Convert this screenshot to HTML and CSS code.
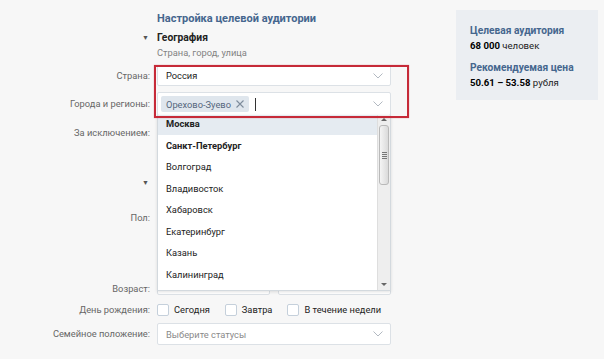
FILE: index.html
```html
<!DOCTYPE html>
<html lang="ru">
<head>
  <meta charset="UTF-8" />
  <title>Настройка целевой аудитории</title>
  <link rel="stylesheet" href="styles.css">
</head>
<body>
  <div class="page">
    <div class="form">
      <div class="row title-row">
        <div class="label"></div>
        <h2 class="title">Настройка целевой аудитории</h2>
      </div>

      <div class="row section">
        <div class="label"><span class="arrow">▼</span></div>
        <div class="section-name">География</div>
      </div>
      <div class="row hint-row">
        <div class="label"></div>
        <div class="hint">Страна, город, улица</div>
      </div>

      <div class="row country-row">
        <div class="label">Страна:</div>
        <div class="select">
          <span class="value">Россия</span>
          <svg class="chevron" width="10" height="6" viewBox="0 0 10 6"><polyline points="0.5,0.5 5,5 9.5,0.5" fill="none" stroke="#a9b1ba" stroke-width="0.9"/></svg>
        </div>
      </div>

      <div class="row cities-row">
        <div class="label">Города и регионы:</div>
        <div class="select select-tokens">
          <span class="token">Орехово-Зуево
            <svg width="8" height="8" viewBox="0 0 8 8"><path d="M0.5 0.5 L7.5 7.5 M7.5 0.5 L0.5 7.5" stroke="#7d8c9c" stroke-width="1.1"/></svg>
          </span>
          <span class="caret"></span>
          <svg class="chevron" width="10" height="6" viewBox="0 0 10 6"><polyline points="0.5,0.5 5,5 9.5,0.5" fill="none" stroke="#a9b1ba" stroke-width="0.9"/></svg>

          <div class="dropdown">
            <ul class="options">
              <li class="active strong">Москва</li>
              <li class="strong">Санкт-Петербург</li>
              <li>Волгоград</li>
              <li>Владивосток</li>
              <li>Хабаровск</li>
              <li>Екатеринбург</li>
              <li>Казань</li>
              <li>Калининград</li>
            </ul>
            <div class="scrollbar">
              <span class="sb-up"></span>
              <span class="sb-thumb"><i></i><i></i><i></i><i></i></span>
              <span class="sb-down"></span>
            </div>
          </div>
        </div>
      </div>

      <div class="row except-row">
        <div class="label">За исключением:</div>
        <div class="select"></div>
      </div>

      <div class="row section section-2">
        <div class="label"><span class="arrow">▼</span></div>
        <div class="section-name"></div>
      </div>

      <div class="row sex-row">
        <div class="label">Пол:</div>
        <div class="plain"></div>
      </div>

      <div class="row age-row">
        <div class="label">Возраст:</div>
        <div class="age-fields">
          <div class="select"></div>
          <div class="select"></div>
        </div>
      </div>

      <div class="row bday-row">
        <div class="label">День рождения:</div>
        <div class="checks">
          <label class="check"><span class="box"></span>Сегодня</label>
          <label class="check"><span class="box"></span>Завтра</label>
          <label class="check"><span class="box"></span>В течение недели</label>
        </div>
      </div>

      <div class="row family-row">
        <div class="label">Семейное положение:</div>
        <div class="select">
          <span class="placeholder">Выберите статусы</span>
          <svg class="chevron" width="10" height="6" viewBox="0 0 10 6"><polyline points="0.5,0.5 5,5 9.5,0.5" fill="none" stroke="#a9b1ba" stroke-width="0.9"/></svg>
        </div>
      </div>

      <div class="highlight"></div>
    </div>

    <aside class="summary">
      <div class="summary-title">Целевая аудитория</div>
      <div class="summary-value"><b>68 000</b> человек</div>
      <div class="summary-title second">Рекомендуемая цена</div>
      <div class="summary-value"><b>50.61 – 53.58</b> рубля</div>
    </aside>
  </div>
</body>
</html>
```

FILE: styles.css
```css
body {
  margin: 0;
  background: #f7f7f7;
  font-family: Roboto, "Open Sans", sans-serif;
  font-size: 9.3px;
  color: #222;
}
.page {
  display: flex;
  align-items: flex-start;
  padding-top: 11px;
}
.form {
  position: relative;
  width: 410px;
}
.row {
  display: grid;
  grid-template-columns: 150px 234px;
  column-gap: 7px;
  align-items: center;
}
.label {
  text-align: right;
  color: #666;
  line-height: 14px;
}
.title-row {
  height: 15px;
}
.title {
  margin: 0;
  font-size: 11px;
  line-height: 15px;
  font-weight: bold;
  color: #45668e;
}
.section {
  margin-top: 4px;
  height: 14px;
  line-height: 14px;
}
.section-name {
  font-weight: bold;
  font-size: 10.3px;
  color: #222;
}
.arrow {
  font-size: 7px;
  color: #555;
  margin-right: 1px;
}
.hint-row {
  margin-top: 2px;
  height: 14px;
}
.hint {
  color: #828282;
  line-height: 14px;
}
.select {
  position: relative;
  height: 21px;
  box-sizing: border-box;
  background: #fff;
  border: 1px solid #dce1e6;
  border-radius: 2px;
  display: flex;
  align-items: center;
  padding: 0 8px;
}
.select .value {
  color: #222;
}
.chevron {
  position: absolute;
  right: 7px;
  top: 50%;
  margin-top: -3px;
}
.country-row {
  margin-top: 5px;
}
.cities-row {
  margin-top: 6px;
}
.select-tokens {
  height: 24px;
  padding: 0 3px;
}
.token {
  display: inline-flex;
  align-items: center;
  gap: 5px;
  height: 16px;
  padding: 0 5px;
  background: #dfe6ed;
  border-radius: 2px;
  color: #55677d;
}
.caret {
  width: 1px;
  height: 13px;
  background: #333;
  margin-left: 6px;
}
.except-row {
  margin-top: 6px;
}
.except-row .select {
  height: 22px;
}
.section-2 {
  margin-top: 31px;
}
.sex-row {
  margin-top: 18px;
}
.plain {
  height: 22px;
}
.age-row {
  margin-top: 44px;
}
.age-row .label {
  align-self: end;
  margin-bottom: -1px;
}
.age-fields {
  display: flex;
  gap: 8px;
}
.age-fields .select {
  flex: 1;
  height: 22px;
}
.bday-row {
  margin-top: 8px;
  height: 14px;
}
.checks {
  display: flex;
  align-items: center;
}
.check {
  display: flex;
  align-items: center;
  gap: 5px;
  margin-right: 15px;
  color: #222;
  line-height: 14px;
  white-space: nowrap;
}
.box {
  width: 12px;
  height: 12px;
  box-sizing: border-box;
  background: #fff;
  border: 1px solid #c5d0db;
  border-radius: 2px;
}
.family-row {
  margin-top: 6px;
}
.family-row .select {
  height: 22px;
}
.placeholder {
  color: #8a8a8a;
}

/* open city list */
.dropdown {
  position: absolute;
  left: -1px;
  right: -1px;
  top: 100%;
  height: 175px;
  background: #fff;
  border: 1px solid #d3d9de;
  border-top: none;
  box-shadow: 0 1px 3px rgba(0, 0, 0, 0.12);
  overflow: hidden;
  z-index: 2;
}
.options {
  list-style: none;
  margin: -2px 0 0;
  padding: 0;
}
.options li {
  height: 21.5px;
  line-height: 21.5px;
  padding-left: 8px;
  color: #222;
}
.options li.strong {
  font-weight: bold;
}
.options li.active {
  background: #e5ebf1;
}
.scrollbar {
  position: absolute;
  top: 0;
  right: 0;
  bottom: 0;
  width: 12px;
  background: #eeeeee;
  border-left: 1px solid #dedede;
}
.sb-up, .sb-down {
  position: absolute;
  left: 3px;
  width: 0;
  height: 0;
  border-left: 3px solid transparent;
  border-right: 3px solid transparent;
}
.sb-up {
  top: 3px;
  border-bottom: 3px solid #666;
}
.sb-down {
  bottom: 4px;
  border-top: 3px solid #666;
}
.sb-thumb {
  position: absolute;
  top: 10px;
  left: 1px;
  width: 10px;
  height: 60px;
  box-sizing: border-box;
  border: 1px solid #b9b9b9;
  border-radius: 3px;
  background: linear-gradient(to right, #f4f4f4, #dadada);
  display: flex;
  flex-direction: column;
  align-items: center;
  justify-content: center;
  gap: 1px;
}
.sb-thumb i {
  display: block;
  width: 5px;
  height: 1px;
  background: #777;
}

.highlight {
  position: absolute;
  left: 154px;
  top: 54px;
  width: 255px;
  height: 53px;
  box-sizing: border-box;
  border: 2px solid #c62a38;
  box-shadow: 0 0 1px rgba(198, 42, 56, 0.5);
  z-index: 3;
  pointer-events: none;
}

.summary {
  margin-left: 46px;
  margin-top: -1px;
  width: 142px;
  box-sizing: border-box;
  padding: 13px 14px 10px;
  background: #ebeef2;
  line-height: 15px;
}
.summary-title {
  font-weight: bold;
  color: #45668e;
  font-size: 10.2px;
}
.summary-title.second {
  margin-top: 7px;
}
.summary-value {
  font-size: 9.6px;
  color: #222;
}
.summary-value b {
  color: #000;
}
```
